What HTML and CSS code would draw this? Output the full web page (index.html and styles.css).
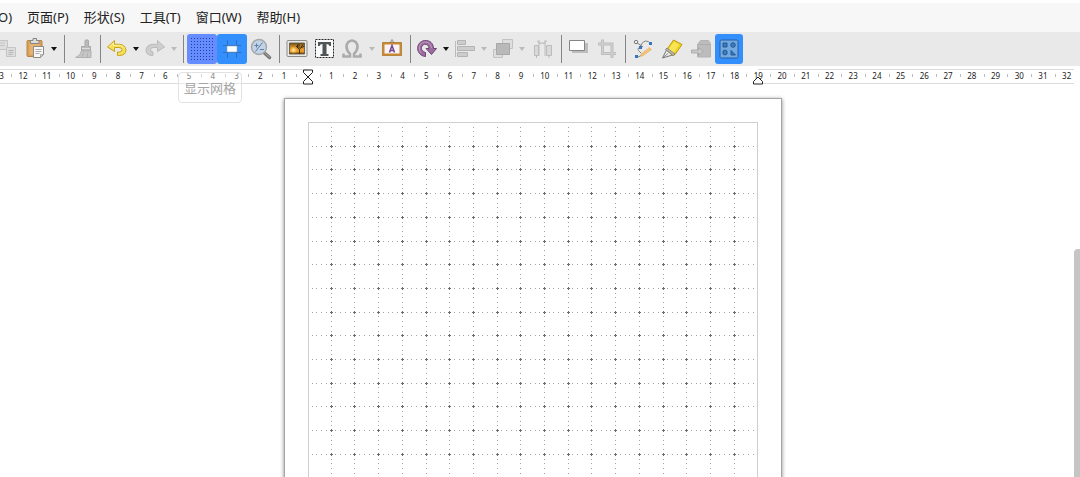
FILE: index.html
```html
<!DOCTYPE html>
<html lang="zh-CN">
<head>
<meta charset="utf-8">
<title>绘图</title>
<link rel="stylesheet" href="styles.css">
</head>
<body>
<nav class="menubar">
  <button class="menu menu-first">O)</button>
  <button class="menu">页面(P)</button>
  <button class="menu">形状(S)</button>
  <button class="menu">工具(T)</button>
  <button class="menu">窗口(W)</button>
  <button class="menu">帮助(H)</button>
</nav>

<div class="toolbar" role="toolbar">
  <button class="tool" aria-label="复制"><svg viewBox="0 0 22 22"><g stroke="#c4c4c4" fill="#dedede"><path d="M1.500 2.500h10v9h-10z"/><path d="M4 5h5M4 7.500h5"/><path d="M10.500 9.500h9v9h-9z"/><path d="M12.500 12.500h5M12.500 14.500h5M12.500 16.500h4" stroke="#b4b4b4"/></g></svg></button>
  <button class="tool" aria-label="粘贴"><svg viewBox="0 0 22 22"><rect x="3" y="2.500" width="15" height="16" rx="1" fill="#d9a05a" stroke="#b98343"/><path d="M5.500 4.500h10v12h-10z" fill="#e6b272"/><path d="M6.500 5.500v-3h2.500v-2h3.500v2h2.500v3z" fill="#ddd" stroke="#858780"/><path d="M9.500 8.500h10v8l-3 3h-7z" fill="#f7f7f7" stroke="#8b8b86"/><path d="M11.500 11.500h6M11.500 13.500h6M11.500 15.500h4" stroke="#aaa"/><path d="M19.500 16.500h-3v3z" fill="#ccc" stroke="#8b8b86" stroke-width=".6"/></svg></button>
  <button class="arrow" aria-label="粘贴选项"></button>
  <span class="sep sep-wide"></span>
  <button class="tool" aria-label="克隆格式"><svg viewBox="0 0 22 22"><path d="M13 2.500q2-1.500 3.500 0v6h2v5h-9v-5h3.500z" fill="#b9b9b9" stroke="#a9a9a9"/><path d="M9.500 13h9.500v6.500H3.500q5-1.500 6-6.500z" fill="#c6c6c6" stroke="#b2b2b2"/><path d="M10 10.500h8" stroke="#ddd"/><path d="M12 14.500l-2 4M15.500 15v4" stroke="#b2b2b2"/></svg></button>
  <span class="sep"></span>
  <button class="tool" aria-label="撤消"><svg viewBox="0 0 22 22"><path d="M1.500 9l7-6.500v3.800h5q6 .5 6.500 6-.3 5-6.500 5.200h-2v-3.500h2q2.600-.4 2.500-2.500-.4-2-3-2h-4.500v4z" fill="#f6de55" stroke="#c8a51e" stroke-linejoin="round"/><path d="M3.300 9l4.200-4v2.400h6q4 .3 5 3" fill="none" stroke="#fff3a0"/></svg></button>
  <button class="arrow" aria-label="撤消列表"></button>
  <button class="tool" aria-label="恢复"><svg viewBox="0 0 22 22"><path d="M20.500 9l-7-6.500v3.800h-5q-6 .5-6.500 6 .3 5 6 5.200h1v-3.500q-2.600-.4-2.500-2.500.4-2 3-2h4v4z" fill="#cecece" stroke="#bababa" stroke-linejoin="round"/></svg></button>
  <button class="arrow arrow-off" aria-label="恢复列表"></button>
  <span class="sep sep-mid"></span>
  <div class="tip-anchor">
    <button class="tool tool-roomy tool-hover" aria-label="显示网格" aria-describedby="tip"><svg class="full" viewBox="0 0 30 30"><defs><pattern id="dots" x="4" y="4" width="3" height="3" patternUnits="userSpaceOnUse"><path d="M0 0h1v1H0z" fill="#263e96"/></pattern></defs><path d="M4 4h22v22H4z" fill="url(#dots)"/></svg></button>
    <span class="tip" id="tip" role="tooltip">显示网格</span>
  </div>
  <button class="tool tool-roomy tool-on" aria-label="移动时的辅助线"><svg viewBox="0 0 22 22"><path d="M6.500 2v18M15.500 2v18M2 7.500h18M2 14.500h18" stroke="#2c70c2"/><path d="M6 8h10v6H6z" fill="#fff" stroke="#8fa3b8" stroke-width=".6"/></svg></button>
  <button class="tool" aria-label="缩放"><svg viewBox="0 0 22 22"><path d="M14.500 15l5 4.500" stroke="#777" stroke-width="3.500" stroke-linecap="round"/><path d="M14.500 14.500l5 4.500" stroke="#aaa" stroke-linecap="round"/><circle cx="9" cy="9" r="7.500" fill="#c3d3e6" stroke="#a5a8aa" stroke-width="1.500"/><path d="M12.500 4.500l-7 9M4.500 7.500h4M6.500 5.500v4M10 11.500h4" stroke="#5d7da5"/></svg></button>
  <span class="sep sep-mid"></span>
  <button class="tool" aria-label="插入图像"><svg viewBox="0 0 22 22"><defs><linearGradient id="sunset" x2="0" y2="1"><stop stop-color="#6b5220"/><stop offset=".35" stop-color="#c98a2a"/><stop offset=".75" stop-color="#f2a12a"/><stop offset="1" stop-color="#6b4208"/></linearGradient><radialGradient id="sun"><stop stop-color="#fff9c0"/><stop offset="1" stop-color="#fbc23c" stop-opacity="0"/></radialGradient></defs><rect x="1" y="2.500" width="20" height="16" rx="1" fill="#e9e9e5" stroke="#8b8c87"/><path d="M3.500 5h15v11h-15z" fill="url(#sunset)" stroke="#534f43" stroke-width=".8"/><circle cx="7.500" cy="12" r="4" fill="url(#sun)"/><path d="M13.500 16v-4.500l-3.500-3.500M13.500 11.500l3.500-5M13 10v-4M15 9.500l3-1M11.500 9.500v-3" stroke="#352507" stroke-width=".9" fill="none"/></svg></button>
  <button class="tool" aria-label="插入文本框"><svg viewBox="0 0 22 22"><path d="M1.500 1.500h18v18h-18z" fill="#fafafa" stroke="#222" stroke-dasharray="2 1"/><path d="M4 4h13v4h-1.500q-.5-2-3-2v10H14.500V18h-8v-2H8.500V6q-2.500 0-3 2H4z" fill="#4d5557"/></svg></button>
  <button class="tool" aria-label="插入特殊字符"><svg viewBox="0 0 22 22"><path d="M1.500 15.500v3h6.500v-2.500C6 14 4.500 12 4.500 8.500Q5 3 10 2.500q5 .5 5.500 6c0 3.500-1.500 5.500-3.500 7.500v2.500h6.500v-3" fill="none" stroke="#acacac" stroke-width="2.600"/></svg></button>
  <button class="arrow arrow-off" aria-label="特殊字符列表"></button>
  <button class="tool tool-roomy" aria-label="插入艺术字"><svg viewBox="0 0 22 22"><path d="M7 6l4-3.500L15 6" fill="none" stroke="#999"/><circle cx="11" cy="2.500" r="1.300" fill="#aaa"/><rect x="2.500" y="5.500" width="17" height="11" fill="#f7f3f9" stroke="#cc8a2d" stroke-width="2"/><path d="M1.500 4.500h19v13h-19z" fill="none" stroke="#99631b" stroke-width=".6"/><path d="M8.500 14.500l2.500-7 2.500 7M9 12.500h4" fill="none" stroke="#75458e" stroke-width="1.500"/></svg></button>
  <span class="sep"></span>
  <button class="tool" aria-label="变形"><svg viewBox="0 0 22 22"><path d="M9.500 18.500C-.5 17.500-1 4 8.500 2.500c6-.5 9 3.500 9 8h3l-5 6-5.500-6h3c0-3-2-4.500-4.500-4.200C4 7.500 4.500 13.500 9.500 14.500z" fill="#9b6c9c" stroke="#71457a" stroke-linejoin="round"/><path d="M5 15C2 11 3 5 8.500 4q6-.3 7 6" fill="none" stroke="#c39fc3"/></svg></button>
  <button class="arrow" aria-label="变形列表"></button>
  <button class="tool" aria-label="对齐"><svg viewBox="0 0 22 22"><path d="M1.500 3v16" stroke="#bbb"/><g fill="#cdcdcd" stroke="#b4b4b4"><path d="M3.500 2.500h8v4h-8zM3.500 8.500h17v4h-17zM3.500 14.500h10v4h-10z"/></g></svg></button>
  <button class="arrow arrow-off" aria-label="对齐列表"></button>
  <button class="tool" aria-label="排列"><svg viewBox="0 0 22 22"><path d="M10.500 1.500h10v9h-10zM1.500 11.500h9v8h-9z" fill="#dedede" stroke="#c2c2c2"/><path d="M4.500 5.500h13v11h-13z" fill="#b9b9b9" stroke="#a8a8a8"/></svg></button>
  <button class="arrow arrow-off" aria-label="排列列表"></button>
  <button class="tool tool-roomy" aria-label="分布"><svg viewBox="0 0 22 22"><g fill="#d9d9d9" stroke="#bcbcbc"><path d="M3.500 7.500h4v10h-4zM15.500 7.500h5v10h-5z"/><path d="M5.500 17.500V20M18 17.500V20M8 2v16M14 2v16M6 3l4 3M16 3l-4 3M8 5h6" fill="none"/></g></svg></button>
  <span class="sep sep-mid"></span>
  <button class="tool" aria-label="阴影"><svg viewBox="0 0 22 22"><path d="M4 5h16v10H4z" fill="#bdbdbd"/><path d="M1.500 2.500h15v10h-15z" fill="#fff" stroke="#858585"/></svg></button>
  <button class="tool" aria-label="裁剪"><svg viewBox="0 0 22 22"><path d="M6.500 1.500v14H20M2 6h14v14" fill="none" stroke="#bebebe" stroke-width="3"/><path d="M6.500 2v13.500H20M2.500 6h13.500v13.500" fill="none" stroke="#d2d2d2"/></svg></button>
  <span class="sep sep-mid"></span>
  <button class="tool" aria-label="编辑节点"><svg viewBox="0 0 22 22"><path d="M4 4l7 5M8.500 8q4-9 11-2M8 9q-4 2 0 5t-2 5" fill="none" stroke="#7d8484"/><circle cx="4" cy="4" r="1.700" fill="#eee" stroke="#777"/><path d="M17 4h3v3h-3zM7 8h3v3H7zM3 17h3v3H3z" fill="#3776bd"/><path d="M8.500 18.500l1-3 8-6 2 2-8 6z" fill="#f3c17c" stroke="#e5b878" stroke-width=".7"/></svg></button>
  <button class="tool tool-roomy" aria-label="粘着点"><svg viewBox="0 0 22 22"><path d="M1.500 20l4-8 6 5z" fill="#ececec" stroke="#777"/><path d="M5.500 12l7-10 8.500 4.500-7 10-2.500 1z" fill="#f2d52a" stroke="#bd9810"/><path d="M7 12l6-8 5 2.500-6 8.500" fill="#f8e553"/><path d="M4.500 11.500l8 6 1.500-1.500-8-6zM2 19.500l5-4" fill="#bcbcbc" stroke="#777" stroke-width=".8"/></svg></button>
  <button class="tool" aria-label="突出效果"><svg viewBox="0 0 22 22"><path d="M7.500 6.500l3-4h8l2 3v13.500h-13z" fill="#bcbcbc" stroke="#b4b4b4"/><path d="M7.500 6.500h13" stroke="#adadad"/><path d="M1.500 12h7V9.500l5 4-5 4V15h-7z" fill="#c8c8c8" stroke="#a2a2a2" stroke-width=".8"/></svg></button>
  <button class="tool tool-on" aria-label="显示绘图功能"><svg viewBox="0 0 22 22"><rect x="2" y="2" width="18" height="18" rx="1.500" fill="#73a8e0" stroke="#285f9f"/><g fill="#3d7bc3" stroke="#174c85" stroke-width=".8"><path d="M5 5h4v4H5zM13 12.500v4.500h4.500z"/><circle cx="15" cy="7" r="2.300"/><path d="M5 13l2-1 2 1v3l-2 1-2-1z"/></g></svg></button>
</div>

<main class="workspace">
  <div class="canvas">
    <div class="ruler" id="ruler">
      <span class="band band-left"></span>
      <span class="band band-right"></span>
      <svg class="indent indent-left" viewBox="0 0 12 16"><path d="M1.500 1v2.500L6 8l4.500-4.500V1zM1.500 15v-2.500L6 8l4.500 4.500V15z" fill="#fff" stroke="#222"/></svg>
      <svg class="indent indent-right" viewBox="0 0 12 16"><path d="M1.500 15v-2.500L6 8l4.500 4.500V15z" fill="#fff" stroke="#222"/></svg>
    </div>
    <div class="sheet">
      <svg class="grid" id="grid" aria-hidden="true"><path class="grid-dots"/><path class="grid-cross"/></svg>
    </div>
  </div>
  <div class="scrollbar"><div class="thumb"></div></div>
</main>
<script src="script.js"></script>
</body>
</html>
```
FILE: styles.css
```css
* { box-sizing: border-box; }

body {
  margin: 0;
  height: 100vh;
  display: flex;
  flex-direction: column;
  overflow: hidden;
  background: #fff;
  color: #222;
  font: 13px/20px "Noto Sans", "Noto Sans CJK SC", sans-serif;
}

button {
  margin: 0;
  padding: 0;
  border: 0;
  background: none;
  color: inherit;
  font: inherit;
}

.menubar {
  display: flex;
  justify-content: flex-start;
  gap: 1px;
  border-top: 3px solid #fefefe;
  background: #f7f7f7;
  padding: 4px 0 5px;
}

.menu {
  flex: none;
  padding: 0 7px;
  white-space: nowrap;
}

.menu-first { padding-left: 0; margin-left: -2px; }

.toolbar {
  display: flex;
  align-items: center;
  padding: 2px 0;
  margin-left: -7px;
  background: #e9e9e9;
}

.tool {
  flex: none;
  display: flex;
  align-items: center;
  justify-content: center;
  width: 28px;
  height: 30px;
  border-radius: 3px;
}

.tool svg { width: 22px; height: 22px; }
.tool svg.full { width: 30px; height: 30px; }
.tool-roomy { width: 30px; }
.tool-on { background: #338ffb; }
.tool-hover { background: #668dff; }

.arrow {
  flex: none;
  display: flex;
  justify-content: center;
  width: 10px;
}

.arrow::before {
  content: "";
  border: 3px solid transparent;
  border-top: 4px solid #111;
  border-bottom: 0;
}

.arrow-off::before { border-top-color: #bbb; }

.sep {
  flex: none;
  width: 6px;
  height: 28px;
  background: linear-gradient(#858585, #858585) center / 1px 100% no-repeat;
}

.sep-mid { width: 8px; }
.sep-wide { width: 10px; }

.tip-anchor { position: relative; }

.tip {
  position: absolute;
  z-index: 2;
  top: 38px;
  left: -9px;
  padding: 5px 5px 4px;
  border: 1px solid #e2e2e2;
  border-radius: 4px;
  background: rgba(255, 255, 255, .4);
  color: #a5a5a5;
  white-space: nowrap;
}

.workspace {
  flex: 1;
  min-height: 0;
  display: flex;
}

.canvas {
  flex: 1;
  min-width: 0;
  display: flex;
  flex-direction: column;
  align-items: center;
  gap: 14px;
  padding: 3px 8px 0 0;
  overflow: hidden;
}

.ruler {
  flex: none;
  display: grid;
  grid-template-columns: repeat(92, minmax(0, 1fr));
  grid-template-rows: 15px;
  width: 1091px;
  color: #222;
  font-size: 8px;
  line-height: 13px;
}

.num {
  grid-row: 1;
  text-align: center;
  background: linear-gradient(#bbb, #bbb) left 5px / 1px 3px no-repeat;
}

.band {
  grid-row: 1;
  border: solid #dcdcdc;
  border-width: 1px 0;
}

.band-left { grid-column: 1 / 28; }
.band-right { grid-column: 66 / -1; }

.indent {
  grid-row: 1;
  z-index: 1;
  justify-self: center;
  width: 12px;
  height: 16px;
}

.indent-left { grid-column: 27 / 29; }
.indent-right { grid-column: 65 / 67; }

.sheet {
  flex: none;
  padding: 23px;
  border: 1px solid #a5a5a5;
  box-shadow: 0 1px 4px #888;
  background: #fff;
}

.grid {
  display: block;
  width: 450px;
  height: 640px;
  border: 1px solid #cfcfcf;
}

.grid-dots { fill: #a2a2a2; }
.grid-cross { fill: #6c6c6c; }

.scrollbar {
  flex: none;
  width: 6px;
  padding-top: 183px;
}

.thumb {
  height: 100%;
  border-radius: 4px 0 0 0;
  background: #c5c5c5;
}
```
FILE: script.js
```javascript
// Ruler: one label per centimetre, left and right of the origin.
const FIRST = -13;
const LAST = 32;
const ruler = document.getElementById('ruler');
for (let n = FIRST; n <= LAST; n++) {
  const label = document.createElement('span');
  label.className = 'num';
  label.style.gridColumn = `${(n - FIRST) * 2 + 1} / span 2`;
  label.textContent = n === 0 ? '' : Math.abs(n);
  ruler.append(label);
}

// Snap grid: five dots per centimetre along each grid line.
const CM = 23.7;
const COLS = 18;
const ROWS = 26;
const px = (n) => Math.round(n * CM) - 2;
const py = (n) => Math.round(n * CM) - 1;
const dot = (x, y) => `M${x} ${y}h1v1h-1z`;
let dots = '';
let crosses = '';
for (let i = 1; i <= COLS; i++) {
  for (let k = 1; k < (ROWS + 1) * 5; k++) dots += dot(px(i), py(k / 5));
}
for (let j = 1; j <= ROWS; j++) {
  for (let k = 1; k < (COLS + 1) * 5; k++) dots += dot(px(k / 5), py(j));
  for (let i = 1; i <= COLS; i++) {
    crosses += `M${px(i)} ${py(j) - 1}h1v3h-1zM${px(i) - 1} ${py(j)}h3v1h-3z`;
  }
}
document.querySelector('.grid-dots').setAttribute('d', dots);
document.querySelector('.grid-cross').setAttribute('d', crosses);
```
